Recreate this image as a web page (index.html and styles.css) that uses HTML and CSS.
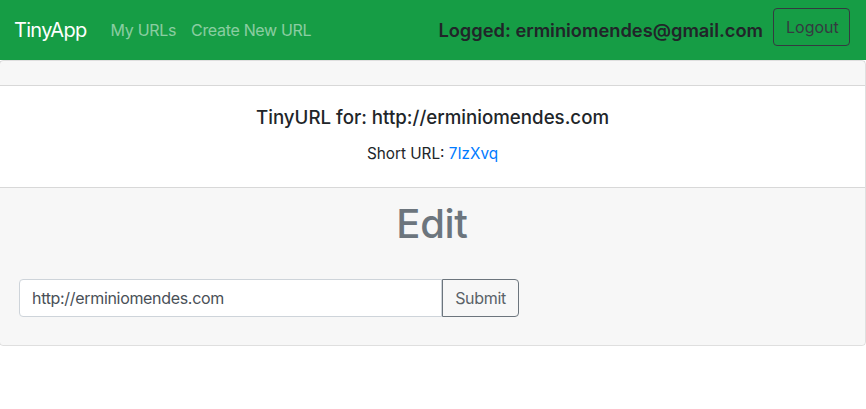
FILE: index.html
```html
<!DOCTYPE html>
<html lang="en">
<head>
<meta charset="utf-8">
<title>TinyApp</title>
<link rel="stylesheet" href="styles.css">
</head>
<body>
<nav class="navbar">
  <a class="brand" href="#">TinyApp</a>
  <div class="nav-links">
    <a class="nav-link" href="#">My URLs</a>
    <a class="nav-link" href="#">Create New URL</a>
  </div>
  <div class="nav-user">Logged: erminiomendes@gmail.com</div>
  <button class="btn-logout" type="button">Logout</button>
</nav>
<main class="card">
  <div class="card-header"></div>
  <div class="card-body">
    <h5 class="card-title">TinyURL for: http://erminiomendes.com</h5>
    <p class="card-text">Short URL: <a class="short-link" href="#">7IzXvq</a></p>
  </div>
  <div class="card-footer">
    <h1 class="edit-title">Edit</h1>
    <form class="edit-form">
      <input class="url-input" type="text" value="http://erminiomendes.com">
      <button class="btn-submit" type="submit">Submit</button>
    </form>
  </div>
</main>
</body>
</html>
```
FILE: styles.css
```css
* { box-sizing: border-box; }
html, body { margin: 0; padding: 0; }
body {
  font-family: Inter, "Noto Sans", "Liberation Sans", sans-serif;
  font-size: 16px;
  line-height: 1.5;
  color: #212529;
  background: #fff;
  letter-spacing: -0.02em;
}
.navbar {
  display: flex;
  align-items: center;
  height: 60px;
  padding: 8px 16px 8px 14px;
  background: #169d45;
}
.brand {
  font-size: 20px;
  line-height: 30px;
  letter-spacing: -0.035em;
  color: #fff;
  text-decoration: none;
  margin-right: 16px;
}
.nav-links { display: flex; flex: 1; }
.nav-link {
  padding: 8px;
  color: rgba(255,255,255,.5);
  text-decoration: none;
}
.nav-link + .nav-link { margin-left: -1px; }
.nav-user {
  font-size: 18.3px;
  font-weight: 600;
  letter-spacing: 0;
  color: #212529;
  margin-top: 2px;
  margin-right: 10px;
}
.btn-logout {
  align-self: flex-start;
  font-family: inherit;
  font-size: 16px;
  letter-spacing: 0;
  line-height: 24px;
  padding: 6px 12px;
  height: 38px;
  width: 77px;
  color: #343a40;
  background: transparent;
  border: 1px solid #343a40;
  border-radius: 4px;
}
.card {
  display: flex;
  flex-direction: column;
  margin-left: -1px;
  border: 1px solid rgba(0,0,0,.125);
  border-radius: 4px;
}
.card-header {
  height: 25px;
  background: rgba(0,0,0,.03);
  border-bottom: 1px solid rgba(0,0,0,.125);
}
.card-body {
  padding: 20px;
  text-align: center;
  height: 101px;
}
.card-title {
  margin: 0 0 12px;
  font-size: 18.7px;
  font-weight: 500;
  letter-spacing: 0;
  line-height: 24px;
}
.card-text { margin: 0; font-size: 15.3px; letter-spacing: 0; line-height: 24px; }
.short-link { color: #007bff; text-decoration: none; }
.card-footer {
  background: rgba(0,0,0,.03);
  border-top: 1px solid rgba(0,0,0,.125);
  padding: 12px 20px 28px 19px;
  border-radius: 0 0 4px 4px;
}
.edit-title {
  margin: 0 0 31px;
  text-align: center;
  font-size: 40px;
  font-weight: 500;
  line-height: 48px;
  color: #6c757d;
}
.edit-form { display: flex; }
.url-input {
  width: 423px;
  height: 38px;
  padding: 6px 12px;
  font-family: inherit;
  font-size: 16px;
  letter-spacing: -0.02em;
  color: #495057;
  background: #fff;
  border: 1px solid #ced4da;
  border-radius: 4px 0 0 4px;
}
.btn-submit {
  width: 77px;
  height: 38px;
  padding: 6px 12px;
  font-family: inherit;
  font-size: 16px;
  letter-spacing: -0.02em;
  color: #5a6268;
  background: transparent;
  border: 1px solid #6c757d;
  border-radius: 0 4px 4px 0;
}
```
